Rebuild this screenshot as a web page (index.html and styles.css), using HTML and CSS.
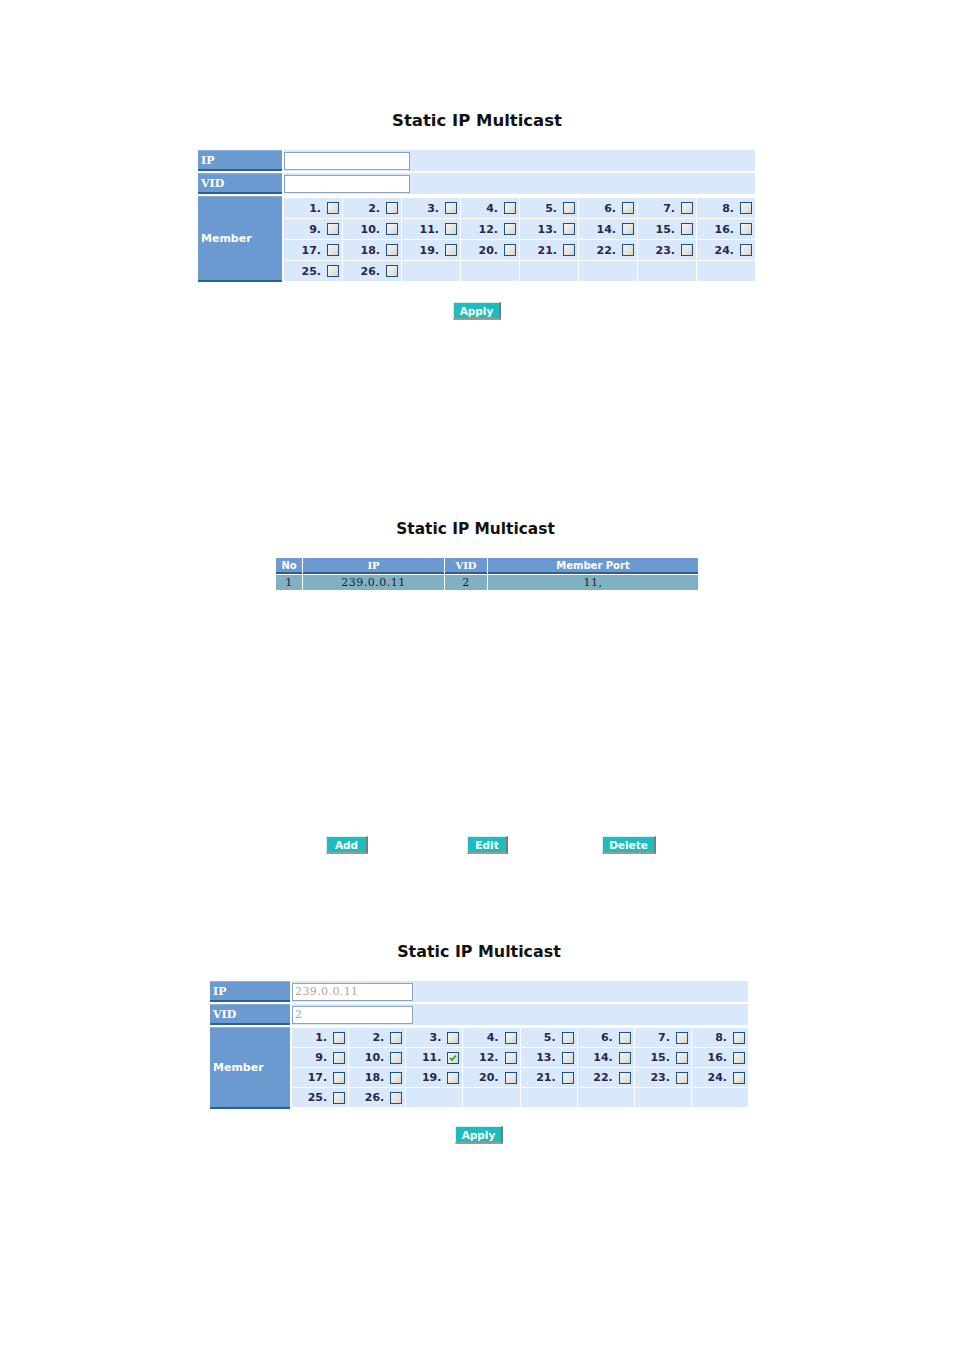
FILE: index.html
```html
<!DOCTYPE html>
<html>
<head>
<meta charset="utf-8">
<link rel="stylesheet" href="styles.css">
</head>
<body>
<div class="page">

  <section class="sec sec1">
    <h1 class="title t1">Static IP Multicast</h1>
    <div class="form f1">
      <div class="lab">IP</div>
      <div class="val"><span class="inp"></span></div>
      <div class="lab">VID</div>
      <div class="val"><span class="inp"></span></div>
      <div class="lab member">Member</div>
      <div class="ports" id="p1"></div>
    </div>
    <div class="btnrow b1"><span class="btn">Apply</span></div>
  </section>

  <section class="sec sec2">
    <h1 class="title t2">Static IP Multicast</h1>
    <div class="list">
      <div class="hd">No</div><div class="hd">IP</div><div class="hd">VID</div><div class="hd">Member Port</div>
      <div class="dc">1</div><div class="dc">239.0.0.11</div><div class="dc">2</div><div class="dc">11,</div>
    </div>
    <div class="actions">
      <span class="btn add">Add</span>
      <span class="btn edit">Edit</span>
      <span class="btn del">Delete</span>
    </div>
  </section>

  <section class="sec sec3">
    <h1 class="title t3">Static IP Multicast</h1>
    <div class="form f3">
      <div class="lab">IP</div>
      <div class="val"><span class="inp filled">239.0.0.11</span></div>
      <div class="lab">VID</div>
      <div class="val"><span class="inp filled">2</span></div>
      <div class="lab member">Member</div>
      <div class="ports" id="p3"></div>
    </div>
    <div class="btnrow b3"><span class="btn">Apply</span></div>
  </section>

</div>
<script src="app.js"></script>
</body>
</html>
```

FILE: styles.css
```css
html, body { margin: 0; padding: 0; background: #fff; }
body { font-family: "DejaVu Sans", Verdana, sans-serif; color: #000; }
.page { width: 954px; height: 1348px; position: relative; overflow: hidden; }

.title {
  margin: 0;
  font-size: 16.5px;
  font-weight: bold;
  line-height: 20px;
  color: #111;
  text-align: center;
  white-space: nowrap;
}

.sec1 { padding-top: 111px; }
.t1 { width: 954px; }

.form {
  display: grid;
  column-gap: 2px;
  row-gap: 2px;
}
.f1 { margin-top: 19px; margin-left: 198px; width: 557px; grid-template-columns: 84px 471px; grid-template-rows: 21px 21px 86px; }
.f3 { margin-top: 19px; margin-left: 210px; width: 538px; grid-template-columns: 80px 456px; grid-template-rows: 21px 21px 82px; }

.lab {
  background: #6a9ad0;
  border-bottom: 2px solid #2d5f93;
  border-top: 1px solid #86b0de;
  box-sizing: border-box;
  color: #fff;
  font-weight: bold;
  font-size: 11px;
  padding-left: 3px;
  display: flex;
  align-items: center;
  font-family: "DejaVu Serif", serif;
}
.lab.member { font-family: "DejaVu Sans", sans-serif; }
.val {
  background: #d9e9fb;
  display: flex;
  align-items: center;
}
.inp {
  display: block;
  box-sizing: border-box;
  width: 126px;
  height: 18px;
  background: #fff;
  border: 1px solid #8aa4c0;
  font-size: 11px;
  line-height: 16px;
  padding-left: 2px;
  color: #a8a8a8;
  letter-spacing: 0.4px;
  font-family: "DejaVu Serif", serif;
}
.f3 .inp { width: 121px; height: 18px; }

.ports {
  display: grid;
  grid-template-columns: repeat(8, 1fr);
  grid-template-rows: 20px 20px 20px 20px;
  column-gap: 1px;
  row-gap: 1px;
  padding-top: 2px;
  align-content: start;
  background: #fff;
}
.f3 .ports { grid-template-rows: 19px 19px 19px 19px; padding-top: 1px; }
.pc {
  background: #d9e9fb;
  display: flex;
  justify-content: flex-end;
  align-items: center;
  padding-right: 3px;
  font-size: 11px;
  font-weight: bold;
  color: #262650;
  font-family: "DejaVu Sans", sans-serif;
}
.pc .n { margin-right: 6px; }
.cb {
  width: 12px;
  height: 12px;
  box-sizing: border-box;
  border: 1px solid #1f4f80;
  background: linear-gradient(135deg, #f4f4f4 0%, #e4e4e0 60%, #d4d4cc 100%);
  position: relative;
}
.cb svg { position: absolute; left: 1px; top: 1px; }

.btnrow { display: flex; }
.b1 { margin-top: 20px; margin-left: 453px; }
.b3 { margin-top: 17px; margin-left: 455px; }

.btn {
  display: inline-flex;
  align-items: center;
  justify-content: center;
  box-sizing: border-box;
  height: 18px;
  width: 48px;
  background: #1ebcbc;
  color: #fff;
  font-weight: bold;
  font-size: 10.5px;
  border-top: 1px solid #d8f0f0;
  border-left: 1px solid #d8f0f0;
  border-right: 2px solid #7a7a70;
  border-bottom: 2px solid #9a9a90;
}

.sec2 { padding-top: 199px; }
.t2 { font-size: 15.4px; width: 951px; }
.list {
  margin-top: 19px;
  margin-left: 276px;
  width: 422px;
  display: grid;
  grid-template-columns: 26px 141px 42px 210px;
  grid-template-rows: 16px 15px;
  column-gap: 1px;
  row-gap: 1px;
}
.hd {
  background: #6a9ad0;
  border-bottom: 2px solid #2d5f93;
  box-sizing: border-box;
  color: #fff;
  font-weight: bold;
  font-size: 10px;
  text-align: center;
  line-height: 15px;
  font-family: "DejaVu Serif", serif;
}
.hd:nth-child(4), .hd:nth-child(1) { font-family: "DejaVu Sans", sans-serif; }
.dc {
  background: #80b1c3;
  color: #1c1c30;
  font-size: 11px;
  text-align: center;
  line-height: 15px;
  letter-spacing: 0.5px;
  font-family: "DejaVu Serif", serif;
}

.actions { margin-top: 246px; display: flex; height: 18px; }
.add { margin-left: 326px; width: 42px; }
.edit { margin-left: 99px; width: 41px; }
.del { margin-left: 94px; width: 54px; }

.sec3 { padding-top: 88px; }
.t3 { font-size: 15.9px; width: 958px; }
```

FILE: app.js
```js
function build(id, checked) {
  var el = document.getElementById(id);
  var html = '';
  for (var i = 1; i <= 32; i++) {
    if (i <= 26) {
      var chk = checked.indexOf(i) >= 0;
      html += '<div class="pc"><span class="n">' + i + '.</span><span class="cb">' +
        (chk ? '<svg width="8" height="8" viewBox="0 0 8 8"><path d="M1 4 L3 6 L7 1.5" fill="none" stroke="#21a121" stroke-width="1.6"/></svg>' : '') +
        '</span></div>';
    } else {
      html += '<div class="pc"></div>';
    }
  }
  el.innerHTML = html;
}
build('p1', []);
build('p3', [11]);
```
